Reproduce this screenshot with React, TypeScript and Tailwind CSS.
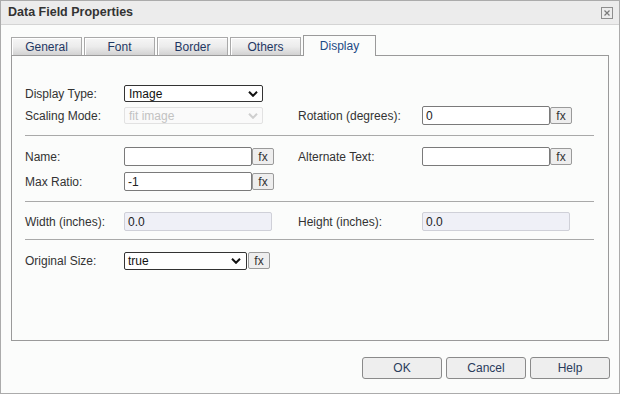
import React from "react";

const Chevron = ({ color = "#111" }: { color?: string }) => (
  <svg width="10" height="6" viewBox="0 0 10 6" className="shrink-0">
    <path d="M1 0.8 L5 4.8 L9 0.8" fill="none" stroke={color} strokeWidth="2" />
  </svg>
);

const Fx = () => (
  <div className="w-[22px] h-[17px] bg-[#eeeeee] border border-[#9a9a9a] rounded-[2px] flex items-center justify-center text-[12px] text-[#333] leading-none shrink-0">
    fx
  </div>
);

const TextBox = ({ value = "", w }: { value?: string; w: string }) => (
  <div className={`${w} h-[19px] bg-white border border-[#7a7a7a] rounded-[2px] pl-[3px] flex items-center text-[12px] text-[#222] shrink-0`}>
    {value}
  </div>
);

const Separator = () => <div className="h-px bg-[#a9a9a9]" />;

export default function App() {
  const tabs = ["General", "Font", "Border", "Others"];
  return (
    <div className="w-[620px] h-[394px] border border-[#ababab] bg-[#fbfcfb] flex flex-col font-['Liberation_Sans',Arial,sans-serif] text-[12px] text-[#333]">
      {/* Title bar */}
      <div className="h-[24px] bg-[#ececec] border-b border-[#d4d4d4] flex items-center justify-between pl-[7px] pr-[6px] shrink-0">
        <span className="font-bold text-[12.5px] text-[#333]">Data Field Properties</span>
        <svg width="12" height="12" viewBox="0 0 12 12" className="mt-[1px]">
          <rect x="0.5" y="0.5" width="11" height="11" fill="none" stroke="#8e8e8e" />
          <path d="M3.5 3.5 L8.5 8.5 M8.5 3.5 L3.5 8.5" stroke="#7a7a7a" strokeWidth="1.2" />
        </svg>
      </div>

      {/* Tabs and panel */}
      <div className="pl-[10px] pr-[10px] pt-[10px]">
        <div className="flex items-end h-[20px] gap-[2px]">
          {tabs.map((t) => (
            <div
              key={t}
              className="w-[71px] h-[18px] border border-b-0 border-[#a9a9a9] bg-gradient-to-b from-[#f6f6f6] via-[#ececec] to-[#d2d2d2] shadow-[inset_1px_1px_0_#ffffff] flex items-center justify-center text-[12px] text-[#1f3763]"
            >
              {t}
            </div>
          ))}
          <div className="relative z-10 w-[73px] h-[21px] mb-[-1px] border border-b-0 border-[#9a9a9a] bg-[#fbfcfb] flex items-center justify-center text-[12px] text-[#1d4a85]">
            Display
          </div>
        </div>
        <div className="h-[286px] border border-[#9a9a9a] pl-[13px] pr-[14px] pt-[29px] flex flex-col">
          {/* Row 1 */}
          <div className="flex items-center h-[17px]">
            <div className="w-[99px]">Display Type:</div>
            <div className="w-[139px] h-[17px] border border-[#333] rounded-[2px] bg-white pl-[4px] pr-[4px] flex items-center justify-between text-[12px] text-[#111]">
              <span>Image</span>
              <Chevron />
            </div>
          </div>
          {/* Row 2 */}
          <div className="flex items-center mt-[4px] h-[19px]">
            <div className="w-[273px] flex items-center">
              <div className="w-[99px]">Scaling Mode:</div>
              <div className="w-[139px] h-[17px] border border-[#e2e2e2] rounded-[2px] bg-[#fafafa] pl-[4px] pr-[4px] flex items-center justify-between text-[12px] text-[#c2c2c2]">
                <span>fit image</span>
                <Chevron color="#cfcfcf" />
              </div>
            </div>
            <div className="flex items-center">
              <div className="w-[124px]">Rotation (degrees):</div>
              <TextBox value="0" w="w-[128px]" />
              <Fx />
            </div>
          </div>
          <div className="mt-[10px]">
            <Separator />
          </div>
          {/* Row 3 */}
          <div className="flex items-center mt-[11px] h-[19px]">
            <div className="w-[273px] flex items-center">
              <div className="w-[99px]">Name:</div>
              <TextBox w="w-[128px]" />
              <Fx />
            </div>
            <div className="flex items-center">
              <div className="w-[124px]">Alternate Text:</div>
              <TextBox w="w-[128px]" />
              <Fx />
            </div>
          </div>
          {/* Row 4 */}
          <div className="flex items-center mt-[6px] h-[19px]">
            <div className="w-[99px]">Max Ratio:</div>
            <TextBox value="-1" w="w-[128px]" />
            <Fx />
          </div>
          <div className="mt-[10px]">
            <Separator />
          </div>
          {/* Row 5 */}
          <div className="flex items-center mt-[10px] h-[19px]">
            <div className="w-[273px] flex items-center">
              <div className="w-[99px]">Width (inches):</div>
              <div className="w-[148px] h-[19px] bg-[#eff0f7] border border-[#cfd0d8] rounded-[2px] pl-[3px] flex items-center text-[#222]">
                0.0
              </div>
            </div>
            <div className="flex items-center">
              <div className="w-[124px]">Height (inches):</div>
              <div className="w-[148px] h-[19px] bg-[#eff0f7] border border-[#cfd0d8] rounded-[2px] pl-[3px] flex items-center text-[#222]">
                0.0
              </div>
            </div>
          </div>
          <div className="mt-[8px]">
            <Separator />
          </div>
          {/* Row 6 */}
          <div className="flex items-center mt-[11px] h-[19px]">
            <div className="w-[99px]">Original Size:</div>
            <div className="w-[123px] h-[18px] border border-[#333] rounded-[2px] bg-white pl-[3px] pr-[5px] flex items-center justify-between text-[12px] text-[#111]">
              <span>true</span>
              <Chevron />
            </div>
            <div className="ml-[1px]">
              <Fx />
            </div>
          </div>
        </div>
      </div>

      {/* Buttons */}
      <div className="flex justify-end gap-[4px] pr-[9px] pt-[16px]">
        {["OK", "Cancel", "Help"].map((b) => (
          <div
            key={b}
            className="w-[80px] h-[22px] bg-[#eeeeee] border border-[#8a8a8a] rounded-[3px] flex items-center justify-center text-[12px] text-[#2a3b5c]"
          >
            {b}
          </div>
        ))}
      </div>
    </div>
  );
}
